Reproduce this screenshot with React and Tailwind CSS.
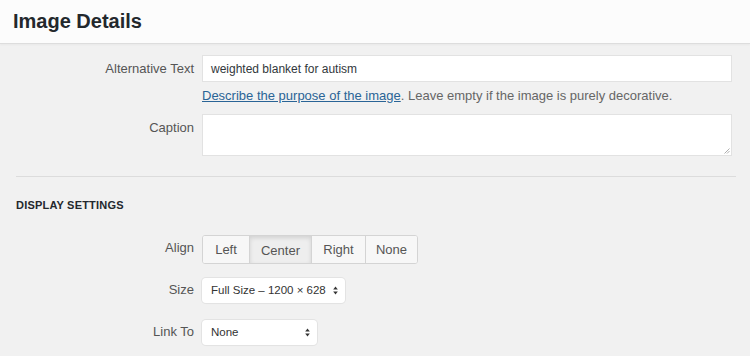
const font = { fontFamily: '"Liberation Sans", Arial, sans-serif' };

const Label = ({ children, className = '' }) => (
  <div className={`w-[194px] shrink-0 text-right text-[13px] text-[#555] ${className}`}>{children}</div>
);

const SelectBox = ({ value, width }) => (
  <div className={`flex h-[25px] items-center justify-between rounded-[4px] bg-white pl-[9px] pr-[7px] text-[11.5px] text-[#333] shadow-[0_0_0_1px_#e3e3e3,0_1px_1px_rgba(0,0,0,0.04)] ${width}`}>
    <span className="whitespace-nowrap">{value}</span>
    <svg width="5" height="9" viewBox="0 0 5 9" className="text-[#333]">
      <path d="M2.5 0.5 L4.8 3.5 H0.2 Z" fill="currentColor" />
      <path d="M2.5 8.5 L4.8 5.5 H0.2 Z" fill="currentColor" />
    </svg>
  </div>
);

export default function App() {
  const aligns = [
    { name: 'Left', w: 'w-[46px]' },
    { name: 'Center', w: 'w-[62px]', active: true },
    { name: 'Right', w: 'w-[54px]' },
    { name: 'None', w: 'w-[52px]' },
  ];

  return (
    <div className="h-[356px] w-[750px] overflow-hidden bg-[#f1f1f1]" style={font}>
      <div className="h-[44px] border-b border-[#dddddd] bg-[#fcfcfc] pl-[13px] pt-[9px] shadow-[0_1px_2px_rgba(0,0,0,0.04)]">
        <h1 className="text-[20px] font-bold leading-[24px] text-[#23282d]">Image Details</h1>
      </div>

      <div className="pt-[11px]">
        <div className="flex items-start gap-[8px]">
          <Label className="pt-[6px] leading-[15px]">Alternative Text</Label>
          <div className="w-[530px]">
            <div className="flex h-[27px] items-center border border-[#e2e2e2] bg-white pl-[8px] text-[12px] text-[#32373c]">
              weighted blanket for autism
            </div>
            <p className="mt-[6px] text-[13px] leading-[16px] text-[#666]">
              <span className="text-[#2a6496] underline">Describe the purpose of the image</span>. Leave empty if the image is purely decorative.
            </p>
          </div>
        </div>

        <div className="mt-[10px] flex items-start gap-[8px]">
          <Label className="pt-[6px] leading-[15px]">Caption</Label>
          <div className="relative h-[42px] w-[530px] border border-[#e2e2e2] bg-white">
            <svg width="6" height="6" viewBox="0 0 6 6" className="absolute bottom-[1px] right-[1px]">
              <path d="M0.5 5.5 L5.5 0.5 M3 5.5 L5.5 3" stroke="#999" strokeWidth="0.8" />
            </svg>
          </div>
        </div>

        <div className="mx-[16px] mt-[20px] w-[720px] border-t border-[#dcdcdc]" />

        <h2 className="ml-[16px] mt-[21px] text-[11px] font-bold uppercase leading-[14px] tracking-[0.2px] text-[#23282d]">Display Settings</h2>

        <div className="mt-[23px] flex items-start gap-[8px]">
          <Label className="pt-[5px] leading-[15px]">Align</Label>
          <div className="flex h-[29px] overflow-hidden rounded-[3px] border border-[#d4d4d4] bg-white">
            {aligns.map((a, i) => (
              <div
                key={a.name}
                className={`flex items-center justify-center text-[13px] text-[#555] ${a.w} ${i > 0 ? 'border-l border-[#d4d4d4]' : ''} ${a.active ? 'bg-[#eeeeee] pt-[3px] shadow-[inset_0_2px_4px_rgba(0,0,0,0.12)]' : 'bg-[#f7f7f7]'}`}
              >
                {a.name}
              </div>
            ))}
          </div>
        </div>

        <div className="mt-[14px] flex items-center gap-[8px]">
          <Label className="-mt-[2px]">Size</Label>
          <SelectBox value="Full Size – 1200 × 628" width="w-[143px]" />
        </div>

        <div className="mt-[17px] flex items-center gap-[8px]">
          <Label className="-mt-[2px]">Link To</Label>
          <SelectBox value="None" width="w-[115px]" />
        </div>
      </div>
    </div>
  );
}
